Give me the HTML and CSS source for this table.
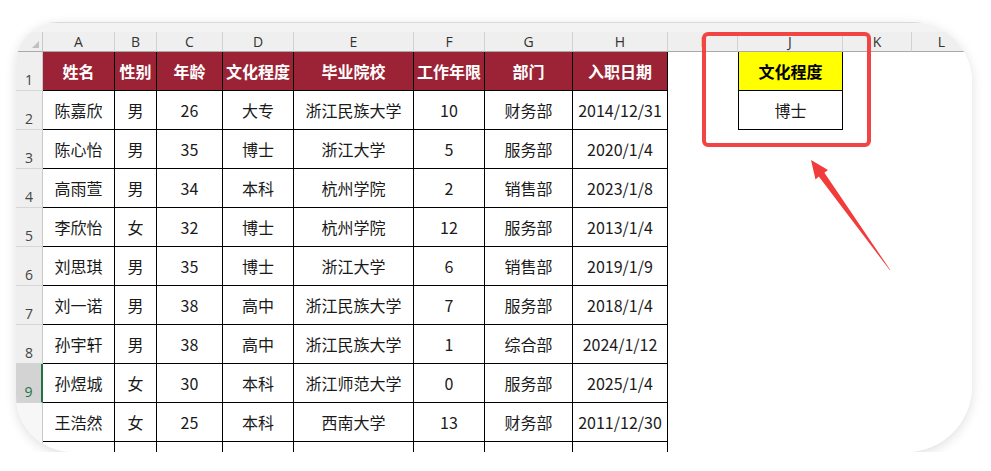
FILE: index.html
```html
<!DOCTYPE html>
<html lang="zh">
<head>
<meta charset="utf-8">
<title>Sheet</title>
<link rel="stylesheet" href="styles.css">
</head>
<body>
<div class="page">
  <div class="card">
    <div class="topbar"></div>
    <div class="sheet">
      <div class="corner"><span class="tri"></span></div>
      <div class="ch">A</div><div class="ch">B</div><div class="ch">C</div><div class="ch">D</div><div class="ch">E</div><div class="ch">F</div><div class="ch">G</div><div class="ch">H</div><div class="ch">I</div><div class="ch">J</div><div class="ch">K</div><div class="ch">L</div>

      <div class="rh">1</div>
      <div class="c h">姓名</div><div class="c h">性别</div><div class="c h">年龄</div><div class="c h">文化程度</div><div class="c h">毕业院校</div><div class="c h">工作年限</div><div class="c h">部门</div><div class="c h">入职日期</div>
      <div class="e"></div><div class="j j1">文化程度</div><div class="e"></div><div class="e"></div>

      <div class="rh">2</div>
      <div class="c">陈嘉欣</div><div class="c">男</div><div class="c">26</div><div class="c">大专</div><div class="c">浙江民族大学</div><div class="c">10</div><div class="c">财务部</div><div class="c">2014/12/31</div>
      <div class="e"></div><div class="j j2">博士</div><div class="e"></div><div class="e"></div>

      <div class="rh">3</div>
      <div class="c">陈心怡</div><div class="c">男</div><div class="c">35</div><div class="c">博士</div><div class="c">浙江大学</div><div class="c">5</div><div class="c">服务部</div><div class="c">2020/1/4</div>
      <div class="e"></div><div class="e"></div><div class="e"></div><div class="e"></div>

      <div class="rh">4</div>
      <div class="c">高雨萱</div><div class="c">男</div><div class="c">34</div><div class="c">本科</div><div class="c">杭州学院</div><div class="c">2</div><div class="c">销售部</div><div class="c">2023/1/8</div>
      <div class="e"></div><div class="e"></div><div class="e"></div><div class="e"></div>

      <div class="rh">5</div>
      <div class="c">李欣怡</div><div class="c">女</div><div class="c">32</div><div class="c">博士</div><div class="c">杭州学院</div><div class="c">12</div><div class="c">服务部</div><div class="c">2013/1/4</div>
      <div class="e"></div><div class="e"></div><div class="e"></div><div class="e"></div>

      <div class="rh">6</div>
      <div class="c">刘思琪</div><div class="c">男</div><div class="c">35</div><div class="c">博士</div><div class="c">浙江大学</div><div class="c">6</div><div class="c">销售部</div><div class="c">2019/1/9</div>
      <div class="e"></div><div class="e"></div><div class="e"></div><div class="e"></div>

      <div class="rh">7</div>
      <div class="c">刘一诺</div><div class="c">男</div><div class="c">38</div><div class="c">高中</div><div class="c">浙江民族大学</div><div class="c">7</div><div class="c">服务部</div><div class="c">2018/1/4</div>
      <div class="e"></div><div class="e"></div><div class="e"></div><div class="e"></div>

      <div class="rh">8</div>
      <div class="c">孙宇轩</div><div class="c">男</div><div class="c">38</div><div class="c">高中</div><div class="c">浙江民族大学</div><div class="c">1</div><div class="c">综合部</div><div class="c">2024/1/12</div>
      <div class="e"></div><div class="e"></div><div class="e"></div><div class="e"></div>

      <div class="rh sel">9</div>
      <div class="c">孙煜城</div><div class="c">女</div><div class="c">30</div><div class="c">本科</div><div class="c">浙江师范大学</div><div class="c">0</div><div class="c">服务部</div><div class="c">2025/1/4</div>
      <div class="e"></div><div class="e"></div><div class="e"></div><div class="e"></div>

      <div class="rh blank"></div>
      <div class="c">王浩然</div><div class="c">女</div><div class="c">25</div><div class="c">本科</div><div class="c">西南大学</div><div class="c">13</div><div class="c">财务部</div><div class="c">2011/12/30</div>
      <div class="e"></div><div class="e"></div><div class="e"></div><div class="e"></div>

      <div class="rh blank"></div>
      <div class="c"></div><div class="c"></div><div class="c"></div><div class="c"></div><div class="c"></div><div class="c"></div><div class="c"></div><div class="c"></div>
      <div class="e"></div><div class="e"></div><div class="e"></div><div class="e"></div>
    </div>

    <div class="mark"></div>
    <svg class="arrow" width="110" height="130" viewBox="0 0 110 130">
      <polygon points="15,8 32,18 28.4,20.8 94.3,118 93.7,118 22.8,24.6 19.5,27.5" fill="#f23b3b"/>
    </svg>
  </div>
</div>
</body>
</html>
```

FILE: styles.css
```css
body {
  margin: 0;
  background: #ffffff;
  font-family: "Noto Sans CJK SC", "Noto Sans", sans-serif;
}

.page {
  padding: 22px 0 0 16px;
}

.card {
  position: relative;
  width: 956px;
  height: 430px;
  overflow: hidden;
  background: #ffffff;
  border-radius: 42px 60px 66px 56px;
  box-shadow: 0 3px 12px rgba(0, 0, 0, 0.13);
}

.topbar {
  height: 10px;
  background: #f3f3f3;
  border-top: 1px solid #dadada;
  box-sizing: border-box;
}

.sheet {
  display: grid;
  grid-template-columns: 27px 72px 42px 66px 71px 120px 71px 88px 95px 70px 105px 69px 1fr;
  grid-template-rows: 20px;
  grid-auto-rows: 39px;
}

.sheet > div {
  box-sizing: border-box;
}

.corner {
  position: relative;
  background: #efefef;
  border-right: 1px solid #c9c9c9;
  border-bottom: 1px solid #a9a9a9;
}

.tri {
  position: absolute;
  right: 3px;
  bottom: 3px;
  width: 0;
  height: 0;
  border-left: 7px solid transparent;
  border-bottom: 7px solid #c0c0c0;
}

.ch {
  background: #efefef;
  border-right: 1px solid #d2d2d2;
  border-bottom: 1px solid #a9a9a9;
  font-family: "Open Sans", "Noto Sans", sans-serif;
  font-size: 14px;
  color: #333333;
  display: flex;
  align-items: center;
  justify-content: center;
  line-height: 1;
}

.rh {
  background: #efefef;
  border-right: 1px solid #c9c9c9;
  border-bottom: 1px solid #d6d6d6;
  font-family: "Open Sans", "Noto Sans", sans-serif;
  font-size: 14px;
  color: #444444;
  display: flex;
  align-items: flex-end;
  justify-content: center;
  padding-bottom: 1px;
  line-height: 1.2;
}

.rh.sel {
  background: #d3d3d3;
  color: #217346;
  border-right: 2px solid #217346;
}

.rh.blank {
  background: #f7f7f7;
  border-bottom: none;
}

.c {
  border-right: 1px solid #000000;
  border-bottom: 1px solid #000000;
  display: flex;
  align-items: center;
  justify-content: center;
  font-size: 16px;
  color: #1a1a1a;
  line-height: 1;
  white-space: nowrap;
}

.c.h {
  background: #9b2335;
  color: #ffffff;
  font-weight: bold;
}

.e {
  background: #ffffff;
}

.j {
  border-left: 1px solid #000000;
  border-right: 1px solid #000000;
  border-bottom: 1px solid #000000;
  display: flex;
  align-items: center;
  justify-content: center;
  font-size: 16px;
  color: #1a1a1a;
  line-height: 1;
}

.j1 {
  background: #ffff00;
  font-weight: bold;
  color: #000000;
}

.mark {
  position: absolute;
  left: 686px;
  top: 10px;
  width: 169px;
  height: 115px;
  box-sizing: border-box;
  border: 4px solid #f24444;
  border-radius: 6px;
}

.arrow {
  position: absolute;
  left: 780px;
  top: 130px;
}
```
